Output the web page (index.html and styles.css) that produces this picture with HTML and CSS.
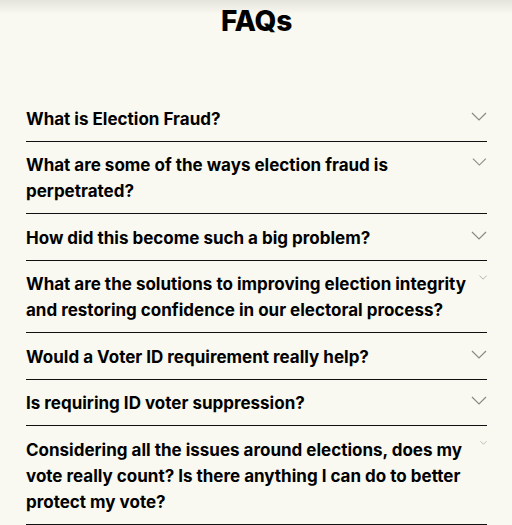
FILE: index.html
```html
<!DOCTYPE html>
<html lang="en">
<head>
    <meta charset="UTF-8">
    <meta name="viewport" content="width=device-width, initial-scale=1.0">
    <title>FAQs</title>
    <link rel="stylesheet" href="styles.css">
</head>
<body>
    <section class="faqs">
        <h1>FAQs</h1>

        <div class="faq-list">
            <div class="faq-item">
                <span class="question">What is Election Fraud?</span>
                <svg class="chevron" viewBox="0 0 16 16"><path d="M1 5l7 7 7-7"/></svg>
            </div>
            <div class="faq-item">
                <span class="question">What are some of the ways election fraud is perpetrated?</span>
                <svg class="chevron" viewBox="0 0 16 16"><path d="M1 5l7 7 7-7"/></svg>
            </div>
            <div class="faq-item">
                <span class="question">How did this become such a big problem?</span>
                <svg class="chevron" viewBox="0 0 16 16"><path d="M1 5l7 7 7-7"/></svg>
            </div>
            <div class="faq-item">
                <span class="question">What are the solutions to improving election integrity and restoring confidence in our electoral process?</span>
                <svg class="chevron" viewBox="0 0 16 16"><path d="M1 5l7 7 7-7"/></svg>
            </div>
            <div class="faq-item">
                <span class="question">Would a Voter ID requirement really help?</span>
                <svg class="chevron" viewBox="0 0 16 16"><path d="M1 5l7 7 7-7"/></svg>
            </div>
            <div class="faq-item">
                <span class="question">Is requiring ID voter suppression?</span>
                <svg class="chevron" viewBox="0 0 16 16"><path d="M1 5l7 7 7-7"/></svg>
            </div>
            <div class="faq-item">
                <span class="question">Considering all the issues around elections, does my vote really count? Is there anything I can do to better protect my vote?</span>
                <svg class="chevron" viewBox="0 0 16 16"><path d="M1 5l7 7 7-7"/></svg>
            </div>
        </div>
    </section>
</body>
</html>
```

FILE: styles.css
```css
/* Página */
body {
    font-family: Inter, 'Noto Sans', sans-serif;
    background: linear-gradient(#e4e4dc, #f9f8f1 14px) #f9f8f1;
    color: #000;
    margin: 0;
    padding: 1px 25px 0 26px;
}

h1 {
    margin: 0;
    font-size: 28px;
    font-weight: 800;
    line-height: 40px;
    text-align: center;
    letter-spacing: -0.3px;
}

.faq-list {
    margin-top: 54px;
}

.faq-item {
    display: flex;
    align-items: flex-start;
    gap: 10px;
    padding: 10.5px 0 9px;
    border-bottom: 1px solid #111;
}

.question {
    font-size: 17px;
    font-weight: 700;
    line-height: 26px;
}

.chevron {
    width: 16px;
    height: auto;
    margin-left: auto;
    margin-top: 2px;
    fill: none;
    stroke: #8a8a85;
    stroke-width: 1.2;
}
```
